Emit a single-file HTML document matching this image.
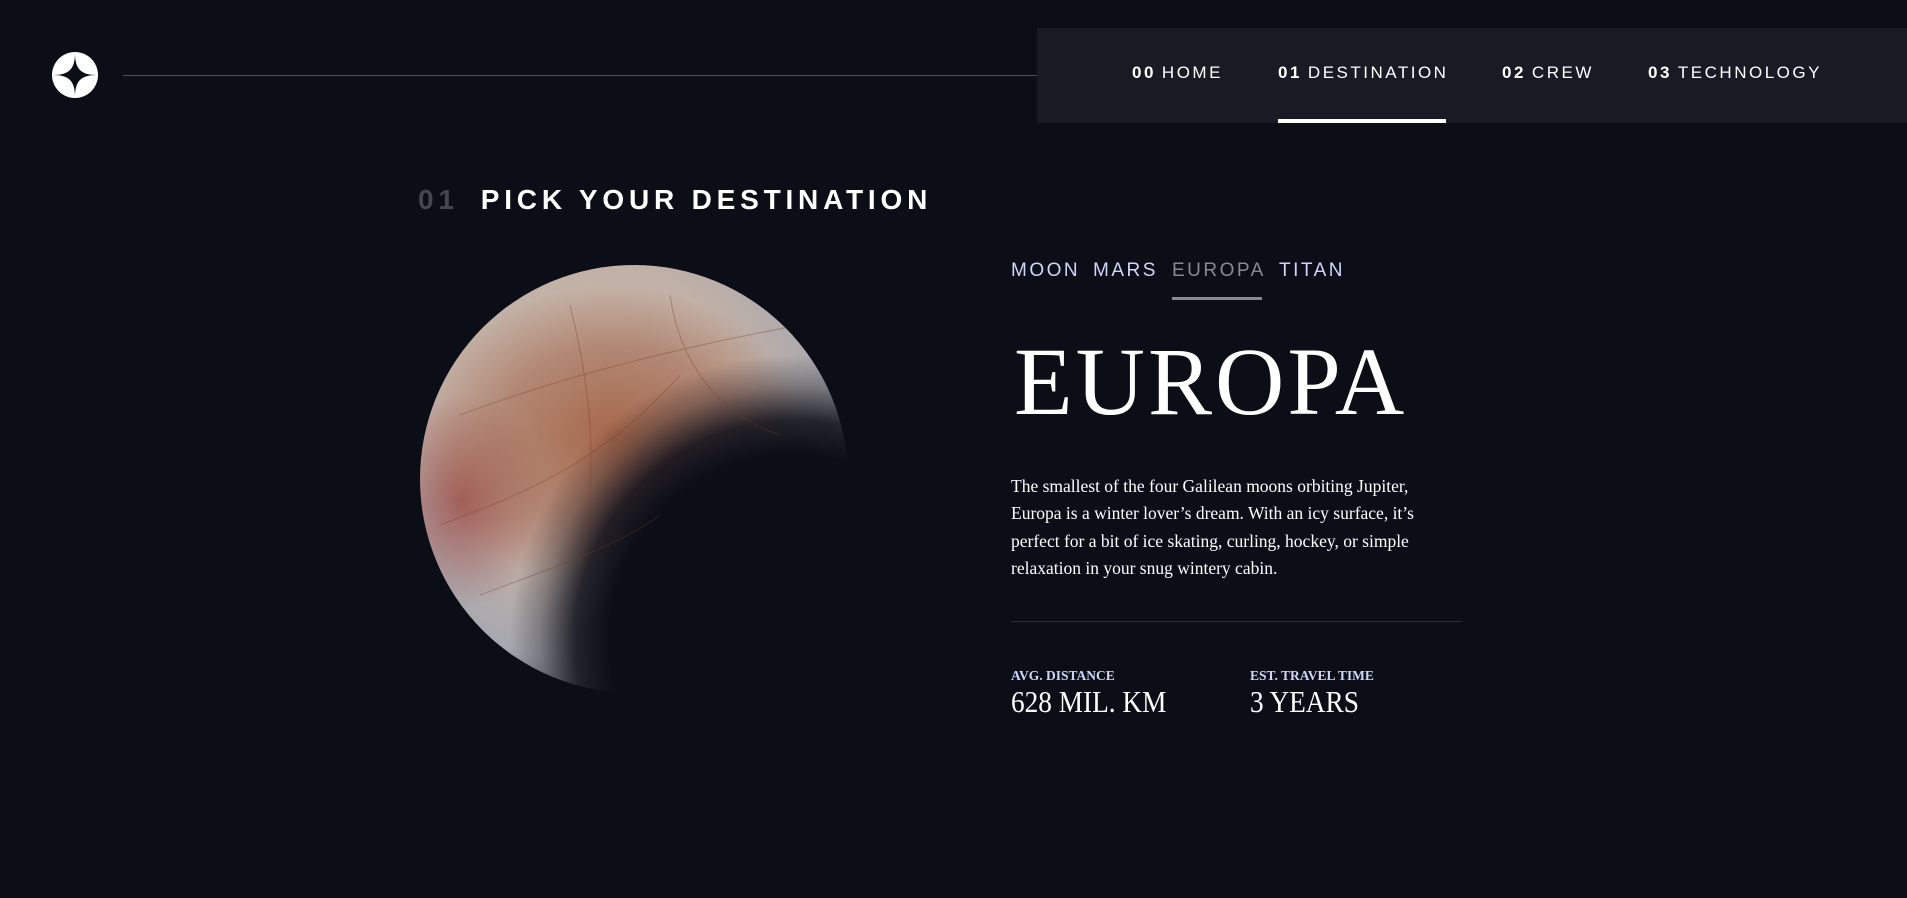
<!DOCTYPE html>
<html><head><meta charset="utf-8"><style>
*{margin:0;padding:0;box-sizing:border-box}
html,body{width:1907px;height:898px;overflow:hidden;background:#0b0d17;color:#fff}
body{position:relative;font-family:"Liberation Sans",sans-serif}
.logo{position:absolute;left:51px;top:51px;width:48px;height:48px}
.hline{position:absolute;left:123px;top:75px;width:937px;height:1px;background:#4b4e57}
.navbg{position:absolute;left:1037px;top:28px;width:870px;height:95px;background:#181b24}
.nav{position:absolute;top:63px;font-size:17px;letter-spacing:2.5px;color:#fff;white-space:nowrap}
.nav b{font-weight:bold;margin-right:6px}
.ul{position:absolute;left:1278px;top:119px;width:168px;height:4px;background:#fff}
.h5{position:absolute;left:418px;top:184px;font-size:28px;font-weight:bold;letter-spacing:4.8px;white-space:nowrap}
.h5 span{color:#45474f;margin-right:22px}
.planet{position:absolute;left:420px;top:265px;width:428px;height:428px;border-radius:50%;overflow:hidden;
background:
radial-gradient(circle 285px at 375px 375px, #0b0d17 0px, #0b0d17 185px, rgba(11,13,23,0.85) 220px, rgba(11,13,23,0.3) 255px, rgba(11,13,23,0) 285px),
radial-gradient(ellipse 45% 35% at 45% 40%, rgba(160,90,60,0.85) 0%, rgba(160,95,70,0.5) 60%, rgba(160,95,70,0) 100%),
radial-gradient(ellipse 20% 25% at 10% 55%, rgba(140,40,40,0.6) 0%, rgba(140,40,40,0) 100%),
radial-gradient(circle at 40% 35%, #c7b4a2 0%, #c2b1a6 40%, #a7a8b0 65%, #5f6370 85%, #2a2d38 100%)}
.tab{position:absolute;top:260px;font-size:19px;letter-spacing:2.5px;color:#d0d6f9;white-space:nowrap}
.tul{position:absolute;left:1172px;top:297px;width:90px;height:3px;background:#878a93}
.title{position:absolute;left:1014px;top:334px;font-family:"Liberation Serif",serif;font-size:96px;line-height:1;letter-spacing:3px;white-space:nowrap}
.p{position:absolute;left:1011px;top:473px;font-family:"Liberation Serif",serif;font-size:17.5px;line-height:27.4px;color:#fff;white-space:nowrap}
.div{position:absolute;left:1011px;top:621px;width:451px;height:1px;background:#2b2e37}
.lab{position:absolute;top:668px;font-family:"Liberation Serif",serif;font-weight:bold;font-size:13.5px;color:#d0d6f9;white-space:nowrap}
.val{position:absolute;top:684px;font-family:"Liberation Serif",serif;font-size:31px;color:#fff;transform:scaleX(0.88);transform-origin:left top;white-space:nowrap}
</style></head><body>
<svg class="logo" viewBox="0 0 48 48"><circle cx="24" cy="24" r="23" fill="#fff"/><path d="M24 2 C24 18 30 24 46 24 C30 24 24 30 24 46 C24 30 18 24 2 24 C18 24 24 18 24 2Z" fill="#0b0d17"/></svg>
<div class="hline"></div>
<div class="navbg"></div>
<div class="nav" style="left:1132px"><b>00</b>HOME</div>
<div class="nav" style="left:1278px"><b>01</b>DESTINATION</div>
<div class="nav" style="left:1502px"><b>02</b>CREW</div>
<div class="nav" style="left:1648px"><b>03</b>TECHNOLOGY</div>
<div class="ul"></div>
<div class="h5"><span>01</span>PICK YOUR DESTINATION</div>
<div class="planet"><svg width="428" height="428" style="position:absolute;left:0;top:0;opacity:.3"><g stroke="#7a3a22" stroke-width="1.2" fill="none"><path d="M40 150 C120 120 220 90 380 60"/><path d="M20 260 C100 230 180 200 260 110"/><path d="M60 330 C140 300 200 280 240 250"/><path d="M150 40 C170 120 180 200 160 300"/><path d="M250 30 C260 100 300 150 360 170"/></g></svg></div>
<div class="tab" style="left:1011px">MOON</div>
<div class="tab" style="left:1093px">MARS</div>
<div class="tab" style="left:1172px;color:#878a93">EUROPA</div>
<div class="tab" style="left:1279px">TITAN</div>
<div class="tul"></div>
<div class="title">EUROPA</div>
<div class="p">The smallest of the four Galilean moons orbiting Jupiter,<br>Europa is a winter lover’s dream. With an icy surface, it’s<br>perfect for a bit of ice skating, curling, hockey, or simple<br>relaxation in your snug wintery cabin.</div>
<div class="div"></div>
<div class="lab" style="left:1011px">AVG. DISTANCE</div>
<div class="lab" style="left:1250px">EST. TRAVEL TIME</div>
<div class="val" style="left:1011px">628 MIL. KM</div>
<div class="val" style="left:1250px">3 YEARS</div>
</body></html>
